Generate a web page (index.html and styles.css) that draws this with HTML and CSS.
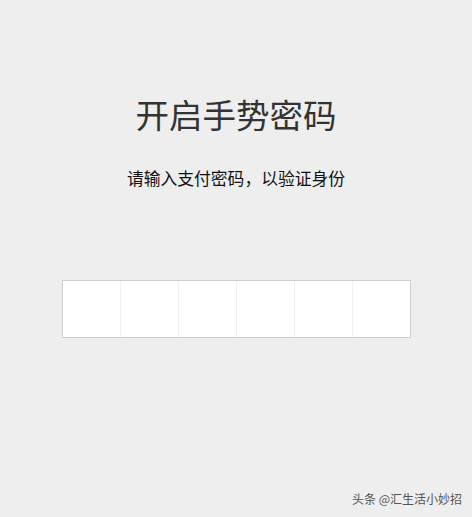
FILE: index.html
```html
<!DOCTYPE html>
<html lang="zh-CN">

<head>
  <meta charset="UTF-8">
  <meta name="viewport" content="width=device-width, initial-scale=1.0">
  <title>开启手势密码</title>
  <link rel="stylesheet" href="styles.css">
</head>

<body>
  <div class="page">
    <h2 class="title">开启手势密码</h2>
    <p class="tip">请输入支付密码，以验证身份</p>
    <ul class="pwd-box">
      <li></li>
      <li></li>
      <li></li>
      <li></li>
      <li></li>
      <li></li>
    </ul>
    <div class="mark">头条 @汇生活小妙招</div>
  </div>
</body>

</html>
```

FILE: styles.css
```css
html,
body {
  width: 100%;
  height: 100%;
}

body {
  margin: 0;
  background-color: #eeeeee;
  font-family: "Noto Sans CJK SC", "Noto Sans", sans-serif;
}

h2,
ul,
p {
  margin: 0;
}

ul {
  padding-left: 0;
  list-style: none;
}

.page {
  box-sizing: border-box;
  height: 100%;
  padding-top: 91px;
  display: flex;
  flex-direction: column;
  align-items: center;
}

.title {
  font-size: 33.5px;
  font-weight: normal;
  line-height: 46px;
  color: #333;
}

.tip {
  margin-top: 30px;
  font-size: 16.8px;
  line-height: 22px;
  color: #111;
}

.pwd-box {
  display: flex;
  margin-top: 91px;
  width: 349px;
  height: 58px;
  box-sizing: border-box;
  border: 1px solid #cfcfcf;
  background-color: #fff;
}

.pwd-box>li {
  flex: 1;
  border-left: 1px solid #f0f0f0;
}

.pwd-box>li:first-child {
  border-left: none;
}

.mark {
  margin-top: auto;
  align-self: flex-end;
  margin-right: 10px;
  margin-bottom: 9px;
  font-size: 12px;
  line-height: 18px;
  color: #555;
}
```
